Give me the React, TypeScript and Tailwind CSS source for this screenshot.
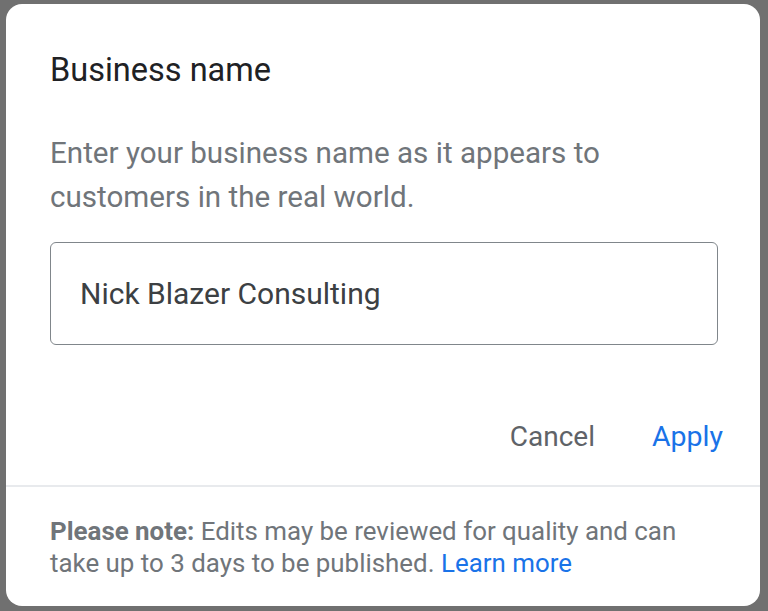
import React from "react";

export default function App() {
  return (
    <div className="w-[768px] h-[611px] bg-[#707070] pt-[4px] pl-[6px] overflow-hidden" style={{ fontFamily: "Roboto, 'Noto Sans', sans-serif" }}>
      <div className="w-[754px] h-[602px] bg-white rounded-[16px] flex flex-col">
        <div className="px-[44px] pt-[46px]">
          <h1 className="text-[32.5px] leading-[40px] text-[#202124]">Business name</h1>
          <p className="mt-[41px] text-[29.6px] leading-[44px] text-[#70757a]">
            Enter your business name as it appears to
            <br />
            customers in the real world.
          </p>
          <div className="mt-[23px] w-[668px] h-[103px] border border-[#80868b] rounded-[6px] flex items-center px-[29px]">
            <span className="text-[30px] text-[#3c4043]">Nick Blazer Consulting</span>
          </div>
        </div>
        <div className="flex justify-end items-center gap-[57px] pr-[37px] mt-[72px] h-[40px]">
          <span className="text-[28px] text-[#5f6368]">Cancel</span>
          <span className="text-[28.5px] text-[#1a73e8]">Apply</span>
        </div>
        <div className="mt-[28px] border-t-2 border-[#e8eaed]"></div>
        <div className="px-[44px] pt-[28px] text-[25.9px] leading-[32px] text-[#70757a]">
          <span className="font-bold">Please note:</span> Edits may be reviewed for quality and can
          <br />
          take up to 3 days to be published. <span className="text-[#1a73e8]">Learn more</span>
        </div>
      </div>
    </div>
  );
}
